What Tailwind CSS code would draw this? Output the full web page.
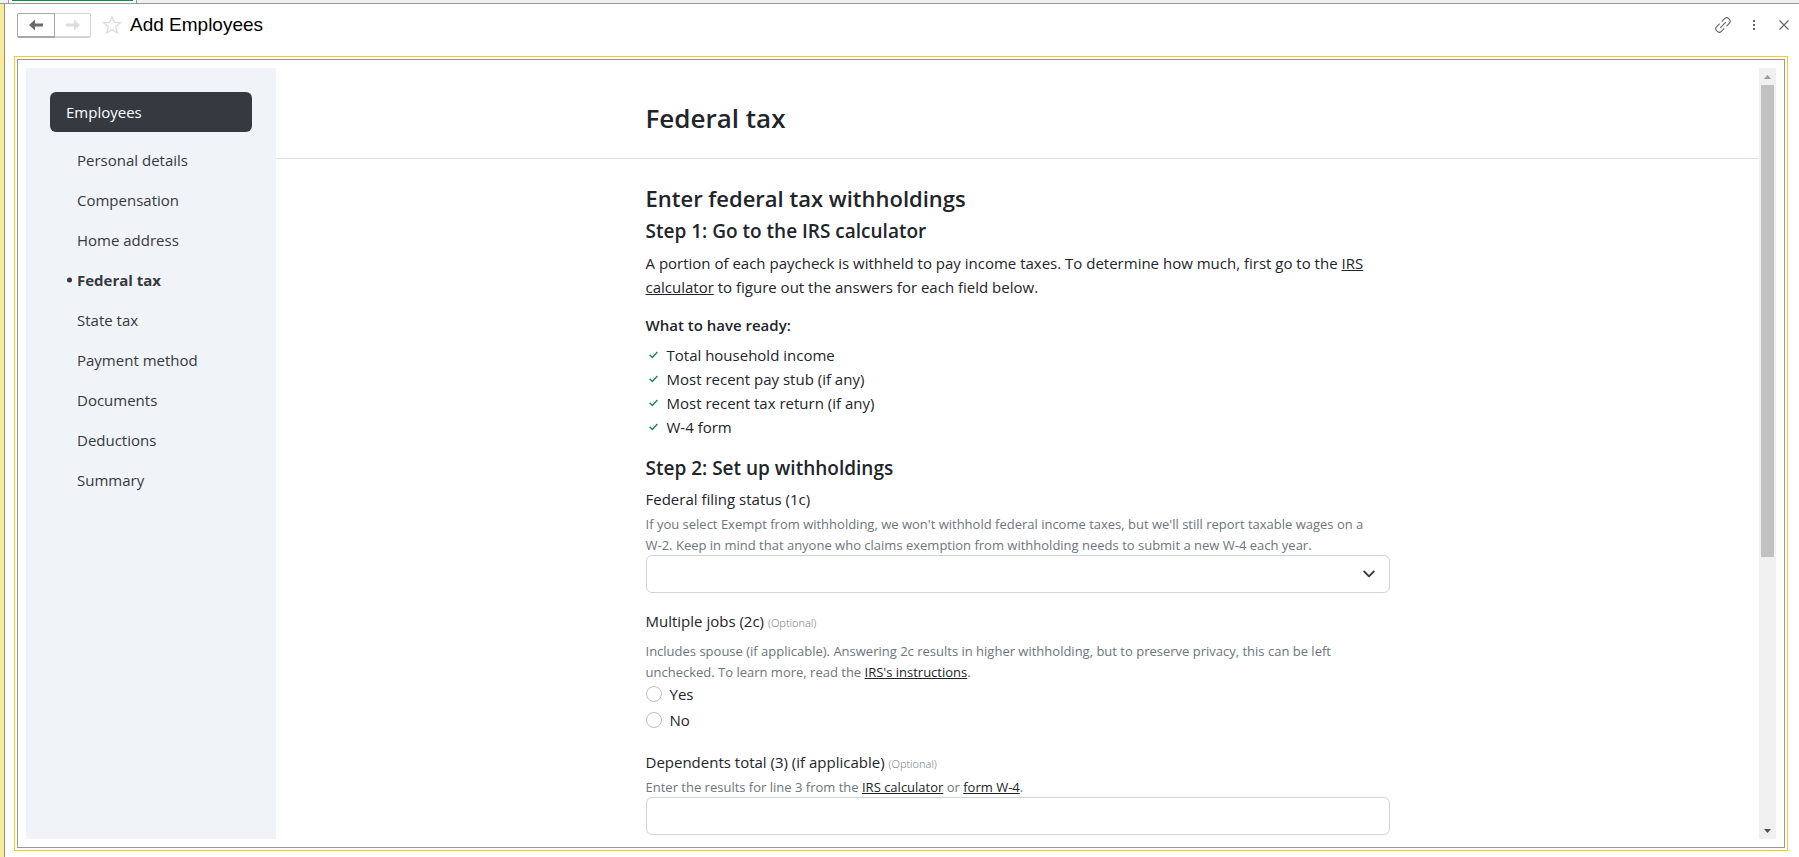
<!DOCTYPE html>
<html lang="en">
<head>
<meta charset="utf-8">
<title>Add Employees</title>
<script src="https://cdn.jsdelivr.net/npm/@tailwindcss/browser@4"></script>
</head>
<body class="flex h-screen flex-col overflow-hidden bg-white font-['Open_Sans',sans-serif] text-[15px] leading-6 text-[#212529]">
  <div class="flex h-1 shrink-0 border-b border-[#999] bg-[#f0f0f0] pl-2">
    <div class="w-[129px] border-x border-[#999] bg-white px-[3px]"><div class="h-px bg-[#009646]"></div></div>
  </div>
  <div class="flex min-h-0 flex-1">
    <div class="w-[5px] shrink-0 border-r border-[#998f66] bg-[#f8eb9b]"></div>
    <div class="flex min-w-0 flex-1 flex-col pr-[10px] pb-[6px] pl-[9px]">
      <header class="flex h-[52px] shrink-0 items-start pt-[9px] pl-[3px]">
        <div class="flex h-[25px]">
          <button aria-label="Back" class="flex w-[38px] items-center justify-center rounded-l-xs border border-b-2 border-[#a8a8a8]">
            <svg class="h-3 w-[14px]" viewBox="0 0 14 12" fill="#6a6a6a"><path d="M0 6 6 .5v4h8v3H6v4z"/></svg>
          </button>
          <button aria-label="Forward" class="flex w-9 items-center justify-center rounded-r-xs border border-b-2 border-l-0 border-[#d4d4d4]">
            <svg class="h-3 w-[14px]" viewBox="0 0 14 12" fill="#dcdcdc"><path d="M14 6 8 .5v4H0v3h8v4z"/></svg>
          </button>
        </div>
        <button aria-label="Favorite" class="ml-[11px] pt-[2px]">
          <svg class="h-5 w-5" viewBox="0 0 20 20" fill="none" stroke="#dcdcdc" stroke-width="1.3"><path d="M10 1.5 12.2 7.3 18.6 7.6 13.6 11.6 15.3 18 10 14.4 4.7 18 6.4 11.6 1.4 7.6 7.8 7.3z"/></svg>
        </button>
        <h1 class="ml-2 font-['Liberation_Sans',sans-serif] text-[19px] text-black">Add Employees</h1>
        <div class="ml-auto flex h-6 items-center gap-4 text-[#666]">
          <button aria-label="Copy link">
            <svg class="h-4 w-4" viewBox="0 0 16 16" fill="none" stroke="currentColor" stroke-width="1.1"><path d="M6.7 4.6 9.6 1.7a2.9 2.9 0 0 1 4.1 0l.6.6a2.9 2.9 0 0 1 0 4.1L11.4 9.300M9.300 11.4l-2.900 2.900a2.9 2.900 0 0 1-4.100 0l-.6-.6a2.900 2.900 0 0 1 0-4.100L4.600 6.700M5.200 10.800l5.600-5.600"/></svg>
          </button>
          <button aria-label="More" class="pr-[7px] pl-[5px]">
            <svg class="h-3 w-1" viewBox="0 0 4 12" fill="currentColor"><path d="M1 1h2v2H1zM1 5h2v2H1zM1 9h2v2H1z"/></svg>
          </button>
          <button aria-label="Close">
            <svg class="h-[10px] w-[10px]" viewBox="0 0 10 10" fill="none" stroke="currentColor" stroke-width="1.2"><path d="M.5.5l9 9M9.500.5l-9 9"/></svg>
          </button>
        </div>
      </header>

      <div class="mr-px flex min-h-0 flex-1 border border-[#fccc18] p-[2px]">
        <div class="flex min-h-0 flex-1 border border-[#999] p-2">
          <nav aria-label="Employees" class="w-[250px] shrink-0 bg-[#f0f3f8] p-6 text-[#343a40]">
            <a href="#employees" class="block rounded-md bg-[#343a40] px-4 py-2 text-white">Employees</a>
            <ul class="mt-2 pl-[27px]">
              <li><a href="#personal" class="block py-2">Personal details</a></li>
              <li><a href="#compensation" class="block py-2">Compensation</a></li>
              <li><a href="#address" class="block py-2">Home address</a></li>
              <li class="relative font-bold"><span class="absolute top-1/2 -left-[10px] size-[5px] -translate-y-1/2 rounded-full bg-[#343a40]"></span><a href="#federal" aria-current="page" class="block py-2">Federal tax</a></li>
              <li><a href="#state" class="block py-2">State tax</a></li>
              <li><a href="#payment" class="block py-2">Payment method</a></li>
              <li><a href="#documents" class="block py-2">Documents</a></li>
              <li><a href="#deductions" class="block py-2">Deductions</a></li>
              <li><a href="#summary" class="block py-2">Summary</a></li>
            </ul>
          </nav>

          <main class="min-w-0 flex-1 overflow-hidden">
            <div class="border-b border-[#dee2e6] pt-[34px] pb-6">
              <h2 class="mx-auto max-w-[744px] text-[26px] leading-8 font-semibold">Federal tax</h2>
            </div>
            <form class="mx-auto max-w-[744px] pt-[23px]">
              <h3 class="text-[22px] leading-8 font-semibold">Enter federal tax withholdings</h3>
              <h4 class="mt-[5px] text-[19px] font-semibold">Step 1: Go to the IRS calculator</h4>
              <p class="mt-2">A portion of each paycheck is withheld to pay income taxes. To determine how much, first go to the <a href="#irs" class="underline">IRS calculator</a> to figure out the answers for each field below.</p>
              <p class="mt-[14px] font-semibold">What to have ready:</p>
              <ul class="mt-[6px]">
                <li class="flex items-center gap-[9px] pl-[3px]"><svg class="h-2 w-[9px]" viewBox="0 0 9 8" fill="none" stroke="#198754" stroke-width="1.4"><path d="M.6 3.800 3.400 6.500 8.400 1"/></svg>Total household income</li>
                <li class="flex items-center gap-[9px] pl-[3px]"><svg class="h-2 w-[9px]" viewBox="0 0 9 8" fill="none" stroke="#198754" stroke-width="1.4"><path d="M.6 3.800 3.400 6.500 8.400 1"/></svg>Most recent pay stub (if any)</li>
                <li class="flex items-center gap-[9px] pl-[3px]"><svg class="h-2 w-[9px]" viewBox="0 0 9 8" fill="none" stroke="#198754" stroke-width="1.4"><path d="M.6 3.800 3.400 6.500 8.400 1"/></svg>Most recent tax return (if any)</li>
                <li class="flex items-center gap-[9px] pl-[3px]"><svg class="h-2 w-[9px]" viewBox="0 0 9 8" fill="none" stroke="#198754" stroke-width="1.4"><path d="M.6 3.800 3.400 6.500 8.400 1"/></svg>W-4 form</li>
              </ul>
              <h4 class="mt-[17px] text-[19px] font-semibold">Step 2: Set up withholdings</h4>

              <label for="status" class="mt-[7px] block">Federal filing status (1c)</label>
              <p id="status-help" class="mt-[3px] -mb-px text-[13px] leading-[21px] text-[#6c757d]">If you select Exempt from withholding, we won't withhold federal income taxes, but we'll still report taxable wages on a <span class="whitespace-nowrap">W-2.</span> Keep in mind that anyone who claims exemption from withholding needs to submit a new W-4 each year.</p>
              <div class="relative">
                <select id="status" aria-describedby="status-help" class="block h-[38px] w-full appearance-none rounded-md border border-[#ced4da] bg-white px-3"><option></option></select>
                <svg class="pointer-events-none absolute top-[15px] right-[15px] h-2 w-3" viewBox="0 0 12 8" fill="none" stroke="#343a40" stroke-width="1.800" stroke-linecap="round" stroke-linejoin="round"><path d="M1.200 1.500 6 6.300 10.800 1.500"/></svg>
              </div>

              <fieldset class="mt-4">
                <legend>Multiple jobs (2c) <span class="text-[11px] font-light text-[#6c757d]">(Optional)</span></legend>
                <p class="mt-[6px] -mb-px text-[13px] leading-[21px] text-[#6c757d]">Includes spouse (if applicable). Answering 2c results in higher withholding, but to preserve privacy, this can be left unchecked. To learn more, read the <a href="#instructions" class="text-[#212529] underline">IRS's instructions</a>.</p>
                <label class="flex items-center gap-2"><input type="radio" name="jobs" class="size-4 appearance-none rounded-full border border-[#bfbfbf]">Yes</label>
                <label class="mt-[2px] flex items-center gap-2"><input type="radio" name="jobs" class="size-4 appearance-none rounded-full border border-[#bfbfbf]">No</label>
              </fieldset>

              <label for="dependents" class="mt-[18px] block">Dependents total (3) (if applicable) <span class="text-[11px] font-light text-[#6c757d]">(Optional)</span></label>
              <p class="mt-px -mb-px text-[13px] leading-[21px] text-[#6c757d]">Enter the results for line 3 from the <a href="#irs" class="text-[#212529] underline">IRS calculator</a> or <a href="#w4" class="text-[#212529] underline">form W-4</a>.</p>
              <input id="dependents" type="text" class="block h-[38px] w-full rounded-md border border-[#ced4da] px-3">
            </form>
          </main>

          <div class="flex w-[17px] shrink-0 flex-col items-center bg-[#f0f0f0]" aria-hidden="true">
            <div class="flex h-[17px] w-full items-center justify-center"><svg class="h-1 w-[7px]" viewBox="0 0 7 4" fill="#999"><path d="M0 4 3.500 0 7 4z"/></svg></div>
            <div class="w-full flex-1 px-[2px]"><div class="h-[64%] bg-[#c1c1c1]"></div></div>
            <div class="flex h-[17px] w-full items-center justify-center"><svg class="h-1 w-[7px]" viewBox="0 0 7 4" fill="#505050"><path d="M0 0h7L3.500 4z"/></svg></div>
          </div>
        </div>
      </div>
    </div>
  </div>
</body>
</html>
